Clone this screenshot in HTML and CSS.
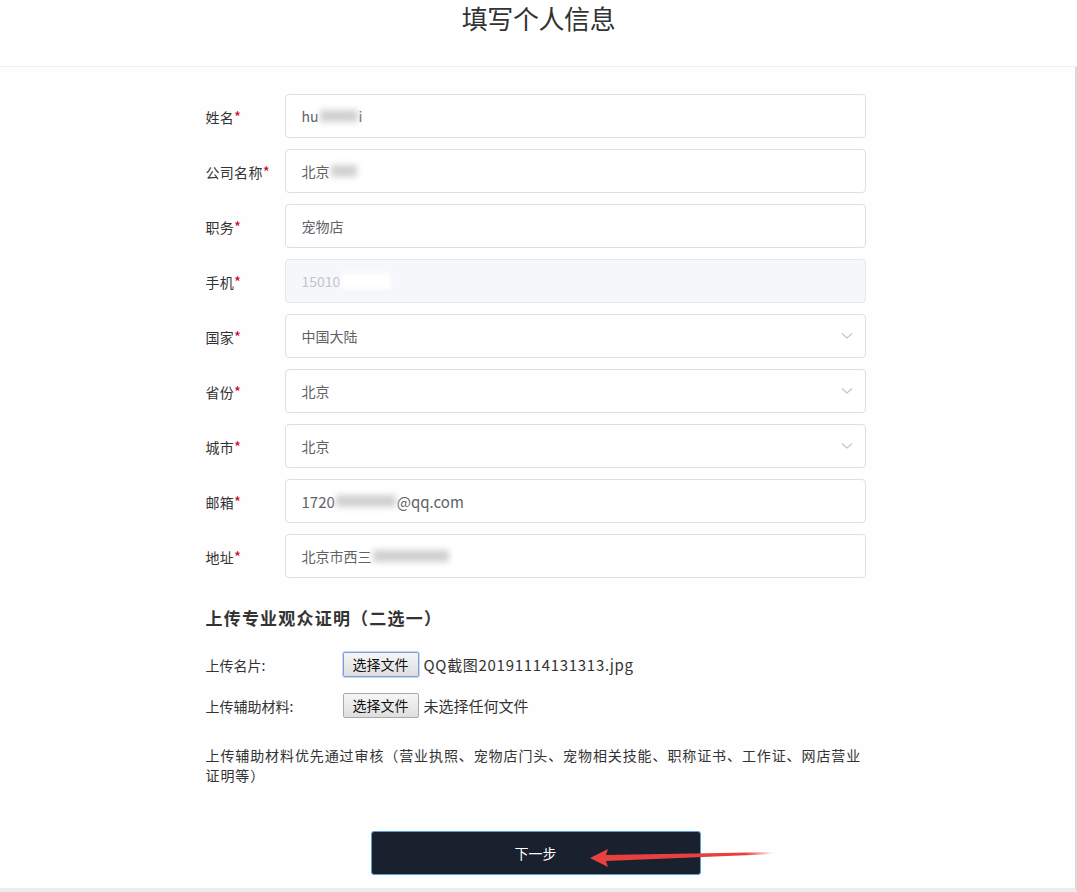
FILE: index.html
```html
<!DOCTYPE html>
<html>
<head>
  <meta charset="utf-8">
  <link rel="stylesheet" href="styles.css">
</head>
<body>
  <div class="header">
    <h1>填写个人信息</h1>
  </div>

  <div class="main">
    <form class="info-form">
      <div class="form-row">
        <label>姓名<span class="req">*</span></label>
        <div class="field">hu<span class="blur" style="width: 38px;"></span>i</div>
      </div>

      <div class="form-row">
        <label>公司名称<span class="req">*</span></label>
        <div class="field">北京<span class="blur" style="width: 26px;"></span></div>
      </div>

      <div class="form-row">
        <label>职务<span class="req">*</span></label>
        <div class="field">宠物店</div>
      </div>

      <div class="form-row">
        <label>手机<span class="req">*</span></label>
        <div class="field disabled">15010<span class="blur white" style="width: 50px;"></span></div>
      </div>

      <div class="form-row">
        <label>国家<span class="req">*</span></label>
        <div class="field select">中国大陆
          <svg class="arrow" width="12" height="8" viewBox="0 0 12 8"><path d="M1 1.5 L6 6 L11 1.5" fill="none" stroke="#c0c4cc" stroke-width="1.2"/></svg>
        </div>
      </div>

      <div class="form-row">
        <label>省份<span class="req">*</span></label>
        <div class="field select">北京
          <svg class="arrow" width="12" height="8" viewBox="0 0 12 8"><path d="M1 1.5 L6 6 L11 1.5" fill="none" stroke="#c0c4cc" stroke-width="1.2"/></svg>
        </div>
      </div>

      <div class="form-row">
        <label>城市<span class="req">*</span></label>
        <div class="field select">北京
          <svg class="arrow" width="12" height="8" viewBox="0 0 12 8"><path d="M1 1.5 L6 6 L11 1.5" fill="none" stroke="#c0c4cc" stroke-width="1.2"/></svg>
        </div>
      </div>

      <div class="form-row">
        <label>邮箱<span class="req">*</span></label>
        <div class="field email">1720<span class="blur" style="width: 60px;"></span>@qq.com</div>
      </div>

      <div class="form-row">
        <label>地址<span class="req">*</span></label>
        <div class="field">北京市西三<span class="blur" style="width: 76px;"></span></div>
      </div>

      <h2>上传专业观众证明（二选一）</h2>

      <div class="upload-row">
        <span class="upload-label">上传名片:</span>
        <span class="file-btn focused">选择文件</span>
        <span class="file-name picked">QQ截图20191114131313.jpg</span>
      </div>

      <div class="upload-row">
        <span class="upload-label">上传辅助材料:</span>
        <span class="file-btn">选择文件</span>
        <span class="file-name">未选择任何文件</span>
      </div>

      <p class="note">上传辅助材料优先通过审核（营业执照、宠物店门头、宠物相关技能、职称证书、工作证、网店营业证明等）</p>

      <div class="submit-wrap">
        <button type="button" class="next-btn">下一步</button>
        <svg class="red-arrow" width="190" height="24" viewBox="0 0 190 24">
          <defs>
            <linearGradient id="fade" x1="0" x2="1" y1="0" y2="0">
              <stop offset="0" stop-color="#e8403f"/>
              <stop offset="0.85" stop-color="#e8403f"/>
              <stop offset="1" stop-color="#e8403f" stop-opacity="0"/>
            </linearGradient>
          </defs>
          <path d="M2 12 L20 3 L18 9 L185 6 L185 8 L18 15 L20 21 Z" fill="url(#fade)"/>
        </svg>
      </div>
    </form>
  </div>
</body>
</html>
```

FILE: styles.css
```css
body {
  margin: 0;
  background-color: #ffffff;
  font-family: "Noto Sans CJK SC", "Liberation Sans", sans-serif;
  color: #333333;
}

.header {
  height: 66px;
  border-bottom: 1px solid #f0f0f0;
  text-align: center;
  background-color: #ffffff;
}

.header h1 {
  margin: 0;
  padding-top: 1px;
  font-size: 26px;
  font-weight: normal;
  line-height: 34px;
  color: #333333;
  letter-spacing: -0.4px;
}

.main {
  height: 821px;
  background-color: #fefefe;
  border-right: 2px solid #d9d9d9;
  border-bottom: 4px solid #ececec;
}

.info-form {
  width: 660px;
  margin: 0 auto;
  padding-top: 27px;
  position: relative;
  left: -2px;
}

.form-row {
  display: flex;
  align-items: center;
  margin-bottom: 11px;
}

.form-row label {
  width: 79px;
  font-size: 14px;
  color: #333333;
  letter-spacing: 0.3px;
}

.req {
  color: #d0021b;
  font-size: 15px;
}

.field {
  flex: 1;
  height: 42px;
  border: 1px solid #dcdfe6;
  border-radius: 4px;
  background-color: #ffffff;
  padding: 0 16px;
  display: flex;
  align-items: center;
  font-size: 14px;
  color: #606266;
}

.field.email {
  font-size: 15px;
}

.field.disabled {
  background-color: #f5f7fa;
  border-color: #e4e7ed;
  color: #c0c4cc;
}

.field.select {
  justify-content: space-between;
}

.arrow {
  margin-right: -4px;
}

.blur {
  display: inline-block;
  height: 12px;
  background-color: #d0d0d0;
  filter: blur(3px);
  margin: 0 1px;
}

.blur.white {
  background-color: #ffffff;
  height: 16px;
  filter: blur(2px);
}

h2 {
  margin: 27px 0 22px;
  font-size: 17px;
  font-weight: bold;
  color: #333333;
  letter-spacing: 1.2px;
}

.upload-row {
  display: flex;
  align-items: center;
  height: 25px;
  margin-bottom: 16px;
  font-size: 14px;
}

.upload-label {
  width: 137px;
  color: #333333;
}

.file-btn {
  display: inline-block;
  height: 23px;
  line-height: 23px;
  padding: 0 9px;
  border: 1px solid #a9a9a9;
  border-radius: 2px;
  background: linear-gradient(#f6f6f6, #dedede);
  font-size: 14px;
  color: #111111;
}

.file-btn.focused {
  border-color: #7b9fd6;
  box-shadow: 0 0 0 1px #c7d8f2;
}

.file-name {
  margin-left: 5px;
  font-size: 15px;
  color: #333333;
}

.file-name.picked {
  letter-spacing: 0.7px;
}

.note {
  margin: 27px 0 0;
  font-size: 14px;
  line-height: 20px;
  color: #333333;
  letter-spacing: 0.9px;
}

.submit-wrap {
  position: relative;
  display: flex;
  justify-content: center;
  margin-top: 46px;
}

.next-btn {
  width: 330px;
  height: 44px;
  background-color: #19202e;
  border: 1px solid #5d9fd8;
  border-radius: 3px;
  color: #ffffff;
  font-size: 14px;
  font-family: "Noto Sans CJK SC", "Liberation Sans", sans-serif;
}

.red-arrow {
  position: absolute;
  left: 382px;
  top: 15px;
}
```
